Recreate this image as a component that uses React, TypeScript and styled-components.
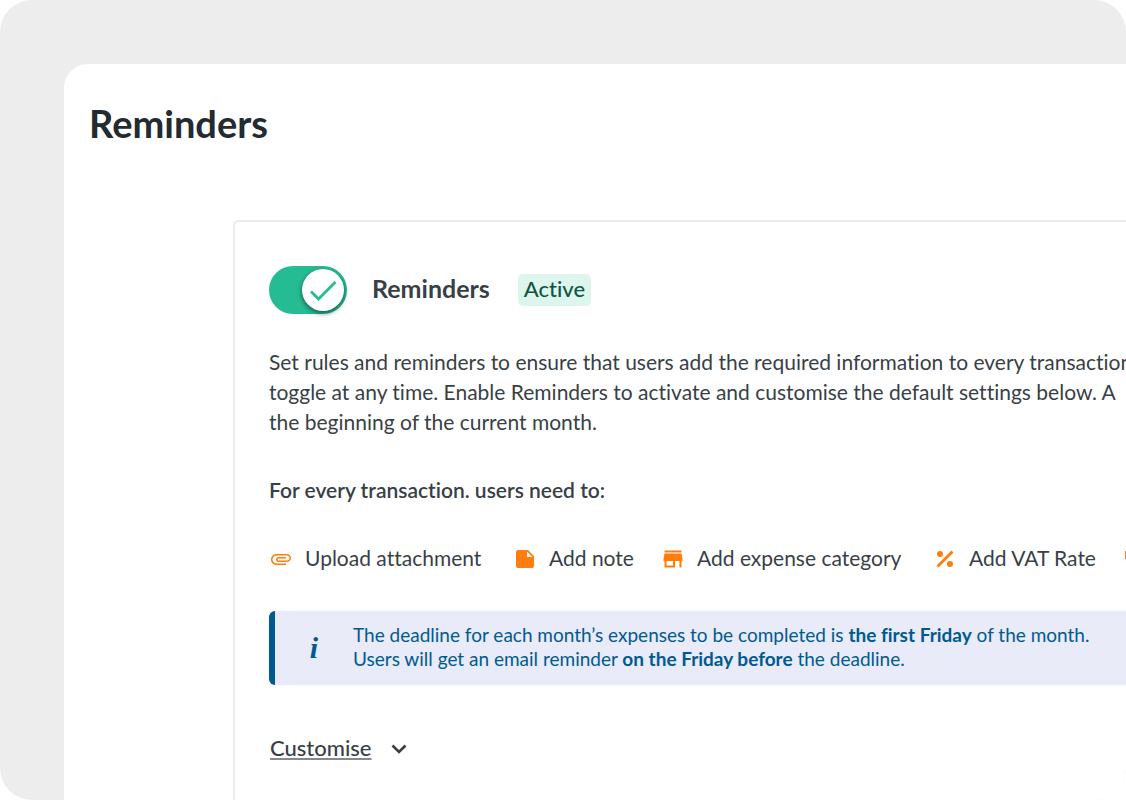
import React, { useState } from "react";
import styled, { createGlobalStyle } from "styled-components";

const GlobalStyle = createGlobalStyle`
  *, *::before, *::after { box-sizing: border-box; }
  body {
    margin: 0;
    background: #ffffff;
    color: #383f47;
    font-family: Lato, "Liberation Sans", sans-serif;
    font-variant-ligatures: none;
  }
  h1, h2, h3, p, ul { margin: 0; padding: 0; }
`;

const Backdrop = styled.div`
  display: flex;
  min-height: 100vh;
  padding: 64px 0 0 64px;
  background: #ededed;
  border-radius: 32px;
  overflow: hidden;
`;

const Page = styled.main`
  display: flex;
  flex-direction: column;
  flex: 1;
  min-width: 0;
  padding: 39px 0 0 25px;
  background: #ffffff;
  border-top-left-radius: 24px;
`;

const PageTitle = styled.h1`
  color: #232b31;
  font-size: 38px;
  font-weight: 700;
  line-height: 40px;
`;

const Card = styled.section`
  flex: 1;
  margin: 77px 0 0 144px;
  padding: 44px 0 36px 34px;
  border: 2px solid #ebebeb;
  border-width: 2px 0 0 2px;
  border-top-left-radius: 6px;
  overflow: hidden;
`;

const CardHeader = styled.header`
  display: flex;
  align-items: center;
  height: 48px;
`;

const Switch = styled.label`
  position: relative;
  width: 78px;
  height: 48px;
  margin-right: 25px;
`;

const SwitchInput = styled.input`
  appearance: none;
  width: 78px;
  height: 48px;
  margin: 0;
  border-radius: 24px;
  background: #b8bec4;
  cursor: pointer;
  &:checked { background: #26bc93; }
`;

const Knob = styled.span<{ $on: boolean }>`
  position: absolute;
  top: 3px;
  left: ${(p) => (p.$on ? 33 : 3)}px;
  width: 42px;
  height: 42px;
  border-radius: 50%;
  background: #ffffff;
  box-shadow: 0 2px 5px rgba(0, 50, 35, 0.7);
  pointer-events: none;
`;

const CardTitle = styled.h2`
  padding-bottom: 4px;
  font-size: 25px;
  font-weight: 700;
  line-height: 32px;
`;

const StatusBadge = styled.span`
  margin-left: 28px;
  padding: 0 6px 2px;
  border-radius: 5px;
  background: #dcf6ee;
  color: #12533f;
  font-size: 22px;
  font-weight: 500;
  line-height: 30px;
`;

const Description = styled.p`
  margin-top: 33px;
  font-size: 21px;
  line-height: 30px;
  white-space: nowrap;
`;

const Subheading = styled.h3`
  margin-top: 38px;
  font-size: 21px;
  font-weight: 600;
  line-height: 30px;
`;

const RuleList = styled.ul`
  display: grid;
  grid-template-columns: 244px 148px 272px 188px 188px;
  margin-top: 38px;
  list-style: none;
`;

const Rule = styled.li`
  display: flex;
  align-items: center;
  gap: 12px;
  font-size: 21px;
  line-height: 30px;
  white-space: nowrap;
  svg { flex: none; margin-top: 2px; }
`;

const Notice = styled.aside`
  display: flex;
  align-items: center;
  height: 74px;
  margin-top: 38px;
  padding-bottom: 2px;
  border-left: 6px solid #005a8f;
  border-radius: 6px 0 0 6px;
  background: #e9ebf8;
  color: #005a8f;
`;

const NoticeMark = styled.span`
  width: 78px;
  padding-top: 2px;
  font-family: "Liberation Serif", serif;
  font-size: 30px;
  font-style: italic;
  font-weight: 700;
  line-height: 30px;
  text-align: center;
`;

const NoticeText = styled.p`
  font-size: 19px;
  line-height: 24px;
  white-space: nowrap;
`;

const CustomiseButton = styled.button`
  display: flex;
  align-items: center;
  gap: 15px;
  margin-top: 48px;
  padding: 0 0 0 1px;
  border: 0;
  background: none;
  color: inherit;
  font: inherit;
  font-size: 22px;
  font-weight: 500;
  line-height: 30px;
  cursor: pointer;
`;

const Underlined = styled.span`
  text-decoration: underline;
  text-decoration-color: #85888d;
  text-decoration-thickness: 2px;
  text-underline-offset: 2px;
`;

function Icon({ d }: { d: string }) {
  return (
    <svg width="24" height="24" viewBox="0 0 24 24" fill="#ff7d0a" aria-hidden="true">
      <path d={d} />
    </svg>
  );
}

const attachmentPath =
  "M2 12.5C2 9.46 4.46 7 7.5 7H18c2.21 0 4 1.79 4 4s-1.79 4-4 4H9.5C8.12 15 7 13.88 7 12.5S8.12 10 9.5 10H17v1.500H9.500c-1.300 0-1.300 2 0 2H18c1.380 0 2.500-1.120 2.500-2.500S19.380 8.500 18 8.500H7.500C5.290 8.500 3.500 10.290 3.500 12.500S5.290 16.500 7.500 16.500H17V18H7.500C4.460 18 2 15.540 2 12.500z";
const notePath =
  "M14 10h5.500L14 4.500V10M5 3h10l6 6v10a2 2 0 0 1-2 2H5a2 2 0 0 1-2-2V5a2 2 0 0 1 2-2z";
const storePath =
  "M20.500 3.500h-17v2h17v-2zM21.500 14v-2l-1-5.500h-17L2.500 12v2h1v6.500h10.500V14h4.500v6.500h2V14h1zM12 18.500H5.500V14H12v4.500z";
const percentPath =
  "M18.500 3.500 20.500 5.500 5.500 20.500 3.500 18.500zM7 4a3 3 0 1 1 0 6 3 3 0 0 1 0-6zM17 14a3 3 0 1 1 0 6 3 3 0 0 1 0-6z";
const tagPath = "M4 4h16v8H4z";

const rules = [
  { label: "Upload attachment", icon: attachmentPath },
  { label: "Add note", icon: notePath },
  { label: "Add expense category", icon: storePath },
  { label: "Add VAT Rate", icon: percentPath },
];

export default function App() {
  const [enabled, setEnabled] = useState(true);

  return (
    <>
      <GlobalStyle />
      <Backdrop>
        <Page>
          <PageTitle>Reminders</PageTitle>
          <Card>
            <CardHeader>
              <Switch htmlFor="reminders-switch">
                <SwitchInput
                  id="reminders-switch"
                  type="checkbox"
                  role="switch"
                  aria-labelledby="reminders-title"
                  checked={enabled}
                  onChange={(e) => setEnabled(e.target.checked)}
                />
                <Knob $on={enabled}>
                  <svg width="42" height="42" viewBox="0 0 42 42" fill="none" aria-hidden="true">
                    <path d="M9 22.500l7.500 7.500L33.500 13" stroke="#26bc93" strokeWidth="2.800" />
                  </svg>
                </Knob>
              </Switch>
              <CardTitle id="reminders-title">Reminders</CardTitle>
              <StatusBadge>Active</StatusBadge>
            </CardHeader>
            <Description>
              Set rules and reminders to ensure that users add the required information to every transaction
              <br />
              toggle at any time. Enable Reminders to activate and customise the default settings below. A
              <br />
              the beginning of the current month.
            </Description>
            <Subheading>For every transaction. users need to:</Subheading>
            <RuleList>
              {rules.map((rule) => (
                <Rule key={rule.label}>
                  <Icon d={rule.icon} />
                  {rule.label}
                </Rule>
              ))}
              <Rule>
                <Icon d={tagPath} />
              </Rule>
            </RuleList>
            <Notice>
              <NoticeMark>i</NoticeMark>
              <NoticeText>
                The deadline for each month’s expenses to be completed is <b>the first Friday</b> of the month.
                <br />
                Users will get an email reminder <b>on the Friday before</b> the deadline.
              </NoticeText>
            </Notice>
            <CustomiseButton type="button">
              <Underlined>Customise</Underlined>
              <svg width="24" height="24" viewBox="0 0 24 24" fill="none" aria-hidden="true">
                <path d="M5.500 9.500L12 16l6.500-6.500" stroke="#383f47" strokeWidth="2.600" />
              </svg>
            </CustomiseButton>
          </Card>
        </Page>
      </Backdrop>
    </>
  );
}
